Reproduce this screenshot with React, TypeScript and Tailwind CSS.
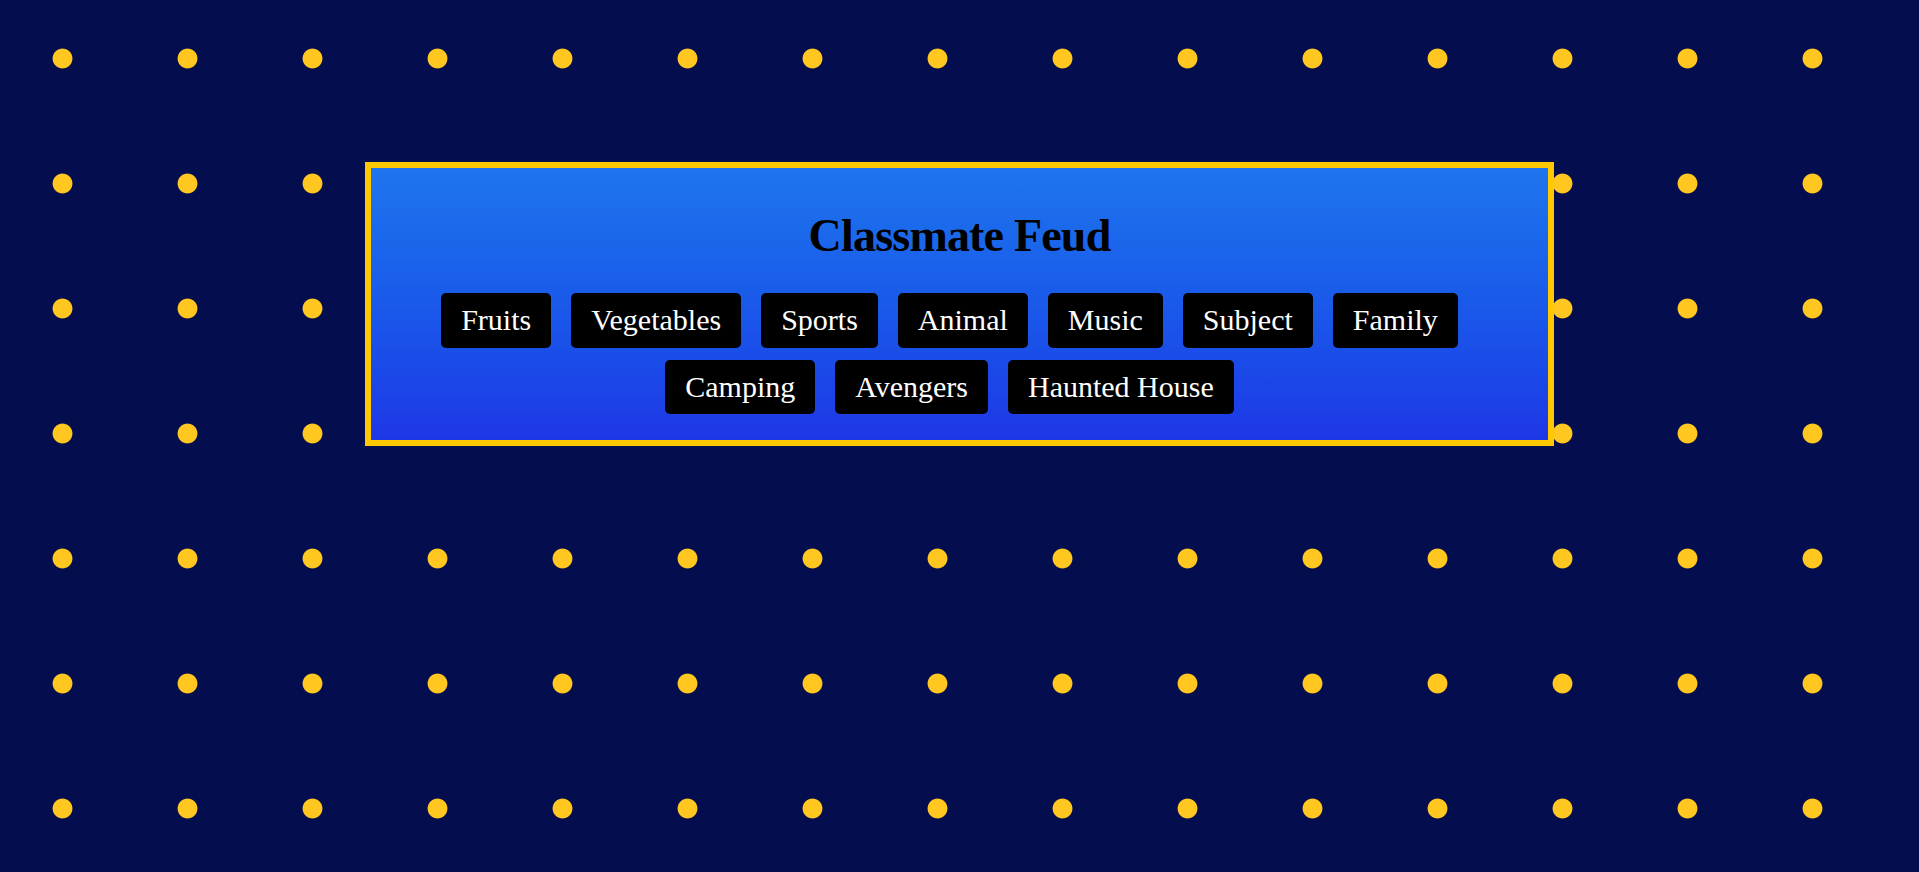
import React from "react";

const categories = [
  "Fruits",
  "Vegetables",
  "Sports",
  "Animal",
  "Music",
  "Subject",
  "Family",
  "Camping",
  "Avengers",
  "Haunted House",
];

export default function App() {
  return (
    <div className="min-h-screen w-full bg-[#040d4d] bg-[radial-gradient(circle_at_center,#ffc720_9.4px,transparent_10.4px)] bg-[length:125px_125px] bg-[position:0_-4px] pt-[162px] font-['Liberation_Serif','Times_New_Roman',serif]">
      <div className="mx-auto flex w-[1189px] flex-col items-center border-[6px] border-[#ffc800] bg-gradient-to-b from-[#1f75ed] to-[#1e36e6] px-10 pt-[41px] pb-[26px]">
        <h1 className="text-[46px] leading-[54px] font-bold tracking-[-0.8px] text-black">Classmate Feud</h1>
        <div className="mt-[30px] flex flex-wrap justify-center gap-y-[12px]">
          {categories.map((c) => (
            <button
              key={c}
              className="mr-5 rounded-[5px] bg-black px-5 py-[10px] text-[30px] leading-[34.5px] text-white"
            >
              {c}
            </button>
          ))}
        </div>
      </div>
    </div>
  );
}
